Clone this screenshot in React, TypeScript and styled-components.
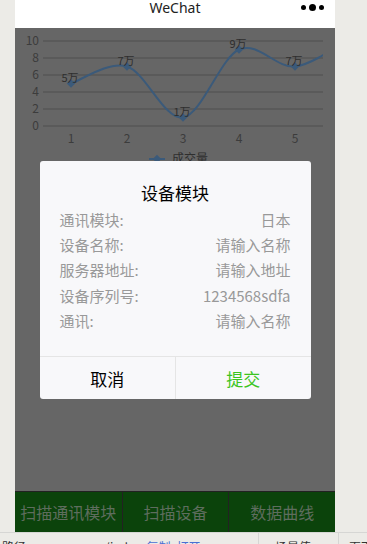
import React from "react";
import styled, { createGlobalStyle } from "styled-components";

const GlobalStyle = createGlobalStyle`
  html, body { margin: 0; padding: 0; }
  body {
    background: #ecebe7;
    font-family: "Noto Sans CJK SC", "Noto Sans", sans-serif;
    overflow: hidden;
  }
`;

const Frame = styled.div`
  width: 367px;
  height: 544px;
  display: flex;
  flex-direction: column;
  overflow: hidden;
`;

const Stage = styled.div`
  display: flex;
  height: 532px;
  flex: none;
`;

const Gutter = styled.div<{ $w: number }>`
  width: ${(p) => p.$w}px;
  flex: none;
  background: #ecebe7;
`;

const Phone = styled.div`
  width: 320px;
  flex: none;
  display: flex;
  flex-direction: column;
  position: relative;
`;

const NavBar = styled.div`
  height: 28px;
  flex: none;
  background: #fff;
  display: grid;
  grid-template-columns: 1fr auto 1fr;
  align-items: start;
`;

const NavTitle = styled.div`
  grid-column: 2;
  font-family: "Noto Sans", "Open Sans", sans-serif;
  font-size: 14px;
  line-height: 15px;
  color: #222;
`;

const NavDots = styled.div`
  grid-column: 3;
  justify-self: end;
  display: flex;
  align-items: center;
  gap: 3px;
  margin-right: 11px;
  height: 14px;
`;

const Dot = styled.span<{ $big?: boolean }>`
  display: block;
  width: ${(p) => (p.$big ? 7 : 5)}px;
  height: ${(p) => (p.$big ? 7 : 5)}px;
  border-radius: 50%;
  background: #000;
`;

const Content = styled.div`
  flex: 1;
  background: #666;
  display: flex;
  flex-direction: column;
`;

const ChartBox = styled.svg`
  display: block;
  width: 320px;
  height: 142px;
  font-family: "Noto Sans CJK SC", "Noto Sans", sans-serif;
`;

const TabBar = styled.div`
  height: 40px;
  flex: none;
  border-top: 1px solid #222;
  background: #0b430b;
  display: grid;
  grid-template-columns: repeat(3, 1fr);
`;

const Tab = styled.div`
  display: flex;
  align-items: center;
  justify-content: center;
  font-size: 16px;
  color: #5e6d5e;
  & + & {
    border-left: 1px solid #222;
  }
`;

const Mask = styled.div`
  position: absolute;
  left: 0;
  right: 0;
  top: 28px;
  bottom: 0;
  display: flex;
  align-items: center;
  justify-content: center;
`;

const Dialog = styled.div`
  width: 271px;
  background: #f8f8fa;
  border-radius: 3px;
  overflow: hidden;
  display: flex;
  flex-direction: column;
`;

const DialogTitle = styled.div`
  padding-top: 20px;
  height: 24px;
  line-height: 24px;
  text-align: center;
  font-size: 17px;
  color: #000;
  margin-bottom: 2px;
`;

const DialogBody = styled.div`
  padding: 0 20px 23px 20px;
  display: flex;
  flex-direction: column;
`;

const Row = styled.div`
  display: flex;
  justify-content: space-between;
  align-items: center;
  height: 25.3px;
  font-size: 15px;
  color: #999;
`;

const DialogFooter = styled.div`
  display: grid;
  grid-template-columns: 1fr 1fr;
  height: 42px;
  border-top: 1px solid #e5e5e5;
`;

const FooterButton = styled.div<{ $primary?: boolean }>`
  display: flex;
  align-items: center;
  justify-content: center;
  font-size: 17px;
  color: ${(p) => (p.$primary ? "#3cc51f" : "#000")};
  & + & {
    border-left: 1px solid #e5e5e5;
  }
`;

const DevBar = styled.div`
  flex: 1;
  border-top: 1px solid #d6d6d4;
  background: #ecebe7;
  display: flex;
  overflow: hidden;
  font-size: 12px;
  line-height: 16px;
  color: #333;
`;

const DevCell = styled.div<{ $w: number }>`
  width: ${(p) => p.$w}px;
  flex: none;
  padding-top: 6px;
  padding-left: 10px;
  display: flex;
  gap: 6px;
  white-space: nowrap;
  & + & {
    border-left: 1px solid #d6d6d4;
  }
`;

const DevLink = styled.span`
  color: #4a6fd3;
`;

const points = [5, 7, 1, 9, 7, 10.4];
const xs = [56, 112, 168, 224, 280, 336];
const y0 = 98;
const unit = 8.5;
const py = (v: number) => y0 - v * unit;

function smoothPath(): string {
  const pts = points.map((v, i) => [xs[i], py(v)]);
  let d = `M${pts[0][0]},${pts[0][1]}`;
  for (let i = 0; i < pts.length - 1; i++) {
    const p0 = pts[i - 1] || pts[i];
    const p1 = pts[i];
    const p2 = pts[i + 1];
    const p3 = pts[i + 2] || p2;
    const c1x = p1[0] + (p2[0] - p0[0]) / 6;
    const c1y = p1[1] + (p2[1] - p0[1]) / 6;
    const c2x = p2[0] - (p3[0] - p1[0]) / 6;
    const c2y = p2[1] - (p3[1] - p1[1]) / 6;
    d += ` C${c1x},${c1y} ${c2x},${c2y} ${p2[0]},${p2[1]}`;
  }
  return d;
}

const Chart = () => {
  const grid = [10, 8, 6, 4, 2, 0];
  return (
    <ChartBox viewBox="0 0 320 142">
      <defs>
        <clipPath id="plot">
          <rect x="0" y="0" width="308" height="142" />
        </clipPath>
      </defs>
      {grid.map((g) => (
        <g key={g}>
          <line x1="28" x2="308" y1={py(g)} y2={py(g)} stroke="#575757" strokeWidth="1.6" />
          <text x="24" y={py(g) + 4} textAnchor="end" fontSize="12" fill="#3c3c3c">
            {g}
          </text>
        </g>
      ))}
      {xs.slice(0, 5).map((x, i) => (
        <text key={x} x={x} y="115" textAnchor="middle" fontSize="12" fill="#3c3c3c">
          {i + 1}
        </text>
      ))}
      <path d={smoothPath()} fill="none" stroke="#3b5a7a" strokeWidth="2" clipPath="url(#plot)" />
      {xs.slice(0, 5).map((x, i) => (
        <g key={"p" + x}>
          <rect
            x={x - 3}
            y={py(points[i]) - 3}
            width="6"
            height="6"
            fill="#3b5a7a"
            transform={`rotate(45 ${x} ${py(points[i])})`}
          />
          <text x={x - 1} y={py(points[i]) - 2} textAnchor="middle" fontSize="11" fill="#2e2e2e">
            {points[i]}万
          </text>
        </g>
      ))}
      <line x1="134" x2="150" y1="131" y2="131" stroke="#3b5a7a" strokeWidth="2" />
      <rect x="139" y="128" width="6" height="6" fill="#3b5a7a" transform="rotate(45 142 131)" />
      <text x="157" y="135" fontSize="12" fill="#2e2e2e">
        成交量
      </text>
    </ChartBox>
  );
};

const rows: [string, string][] = [
  ["通讯模块:", "日本"],
  ["设备名称:", "请输入名称"],
  ["服务器地址:", "请输入地址"],
  ["设备序列号:", "1234568sdfa"],
  ["通讯:", "请输入名称"],
];

export default function App() {
  return (
    <>
      <GlobalStyle />
      <Frame>
        <Stage>
          <Gutter $w={15} />
          <Phone>
            <NavBar>
              <NavTitle>WeChat</NavTitle>
              <NavDots>
                <Dot />
                <Dot $big />
                <Dot />
              </NavDots>
            </NavBar>
            <Content>
              <Chart />
            </Content>
            <TabBar>
              <Tab>扫描通讯模块</Tab>
              <Tab>扫描设备</Tab>
              <Tab>数据曲线</Tab>
            </TabBar>
            <Mask>
              <Dialog>
                <DialogTitle>设备模块</DialogTitle>
                <DialogBody>
                  {rows.map(([k, v]) => (
                    <Row key={k}>
                      <span>{k}</span>
                      <span>{v}</span>
                    </Row>
                  ))}
                </DialogBody>
                <DialogFooter>
                  <FooterButton>取消</FooterButton>
                  <FooterButton $primary>提交</FooterButton>
                </DialogFooter>
              </Dialog>
            </Mask>
          </Phone>
          <Gutter $w={32} />
        </Stage>
        <DevBar>
          <DevCell $w={248}>
            <span style={{ marginLeft: -8 }}>路径</span>
            <span style={{ marginLeft: 40 }}>pages/index</span>
            <DevLink>复制</DevLink>
            <DevLink>打开</DevLink>
          </DevCell>
          <DevCell $w={69}>
            <span style={{ marginLeft: 6 }}>场景值</span>
          </DevCell>
          <DevCell $w={50}>
            <span>页面参数</span>
          </DevCell>
        </DevBar>
      </Frame>
    </>
  );
}
